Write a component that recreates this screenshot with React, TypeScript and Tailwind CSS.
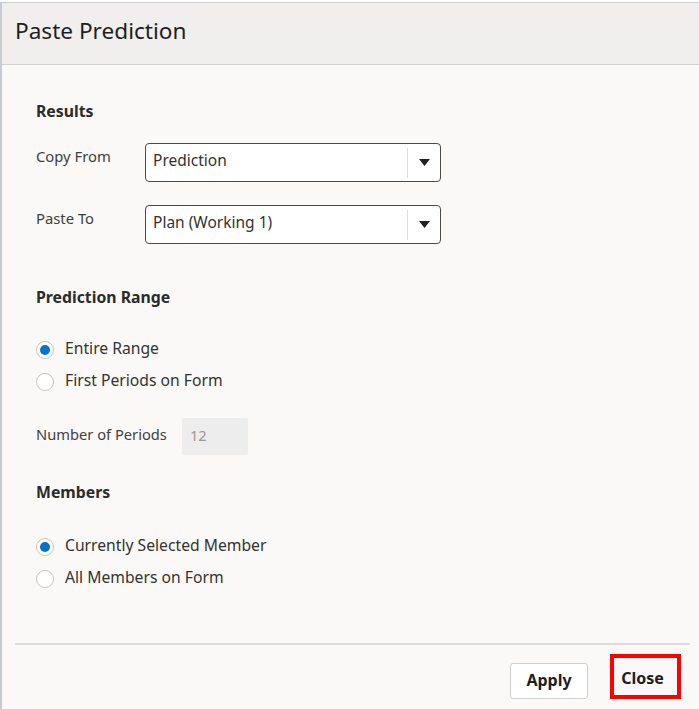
import { useState } from 'react'

const font = { fontFamily: '"Noto Sans", "Open Sans", Arial, sans-serif' }

function Select({ value }: { value: string }) {
  return (
    <div className="flex h-[39px] w-[296px] items-center rounded-[4px] border border-[#4a4a4a] bg-white">
      <span className="flex-1 pb-[3px] pl-[7px] text-[15.5px] text-[#333333]">{value}</span>
      <span className="h-[30px] w-px bg-[#dcdcdc]" />
      <span className="flex w-[32px] items-center justify-center">
        <svg width="11" height="7" viewBox="0 0 11 7">
          <path d="M0 0h11L5.5 7z" fill="#222222" />
        </svg>
      </span>
    </div>
  )
}

function Radio({ checked, label, onClick }: { checked: boolean; label: string; onClick: () => void }) {
  return (
    <button onClick={onClick} className="flex h-[32px] items-center gap-[11px] text-left">
      <span className="flex h-[18px] w-[18px] items-center justify-center rounded-full border border-[#c4c4c4] bg-white">
        {checked && <span className="h-[10px] w-[10px] rounded-full bg-[#0572ce]" />}
      </span>
      <span className="pb-[2px] text-[15.7px] text-[#333333]">{label}</span>
    </button>
  )
}

export default function App() {
  const [range, setRange] = useState('entire')
  const [members, setMembers] = useState('selected')

  return (
    <div className="h-[709px] w-[699px] bg-white pt-[2px]" style={font}>
      <div className="flex h-[707px] flex-col border-t border-l-2 border-[#c8cbcf] bg-[#faf9f8]">
        {/* Header */}
        <div className="flex h-[62px] items-center border-b border-[#cfd1d3] bg-[#f0efee] pb-[5px] pl-[13px]">
          <h1 className="text-[22.6px] text-[#1e1e1e]">Paste Prediction</h1>
        </div>

        {/* Body */}
        <div className="flex-1 px-[34px] pt-[34px]">
          <h2 className="text-[15.8px] leading-6 font-bold text-[#2b2b2b]">Results</h2>

          <div className="mt-[20px] flex items-start">
            <span className="w-[109px] pt-[3px] text-[14.8px] leading-5 text-[#404040]">Copy From</span>
            <Select value="Prediction" />
          </div>
          <div className="mt-[23px] flex items-start">
            <span className="w-[109px] pt-[3px] text-[14.8px] leading-5 text-[#404040]">Paste To</span>
            <Select value="Plan (Working 1)" />
          </div>

          <h2 className="mt-[41px] text-[15.8px] leading-6 font-bold text-[#2b2b2b]">Prediction Range</h2>
          <div className="mt-[25px] flex flex-col">
            <Radio checked={range === 'entire'} label="Entire Range" onClick={() => setRange('entire')} />
            <Radio checked={range === 'first'} label="First Periods on Form" onClick={() => setRange('first')} />
          </div>

          <div className="mt-[20px] flex items-center gap-[15px]">
            <span className="pb-[4px] text-[14.7px] text-[#404040]">Number of Periods</span>
            <div className="flex h-[37px] w-[66px] items-center rounded-[2px] bg-[#ededed] pb-[3px] pl-[8px] text-[14.7px] text-[#9a9a9a]">
              12
            </div>
          </div>

          <h2 className="mt-[25px] text-[15.8px] leading-6 font-bold text-[#2b2b2b]">Members</h2>
          <div className="mt-[27px] flex flex-col">
            <Radio
              checked={members === 'selected'}
              label="Currently Selected Member"
              onClick={() => setMembers('selected')}
            />
            <Radio checked={members === 'all'} label="All Members on Form" onClick={() => setMembers('all')} />
          </div>
        </div>

        {/* Footer */}
        <div className="mx-[13px] mr-[9px] border-t-2 border-[#dddcdb]" />
        <div className="flex h-[64px] items-start justify-end gap-[22px] pt-[9px] pr-[18px]">
          <button className="mt-[9px] h-[36px] w-[78px] rounded-[3px] border border-[#cfcfcf] bg-white pb-[3px] text-[16px] font-bold text-[#1e1e1e]">
            Apply
          </button>
          <button className="h-[45px] w-[71px] border-[4px] border-[#ff0000] pt-[3px] pr-[6px] text-[16px] font-bold text-[#1e1e1e]">
            Close
          </button>
        </div>
      </div>
    </div>
  )
}
